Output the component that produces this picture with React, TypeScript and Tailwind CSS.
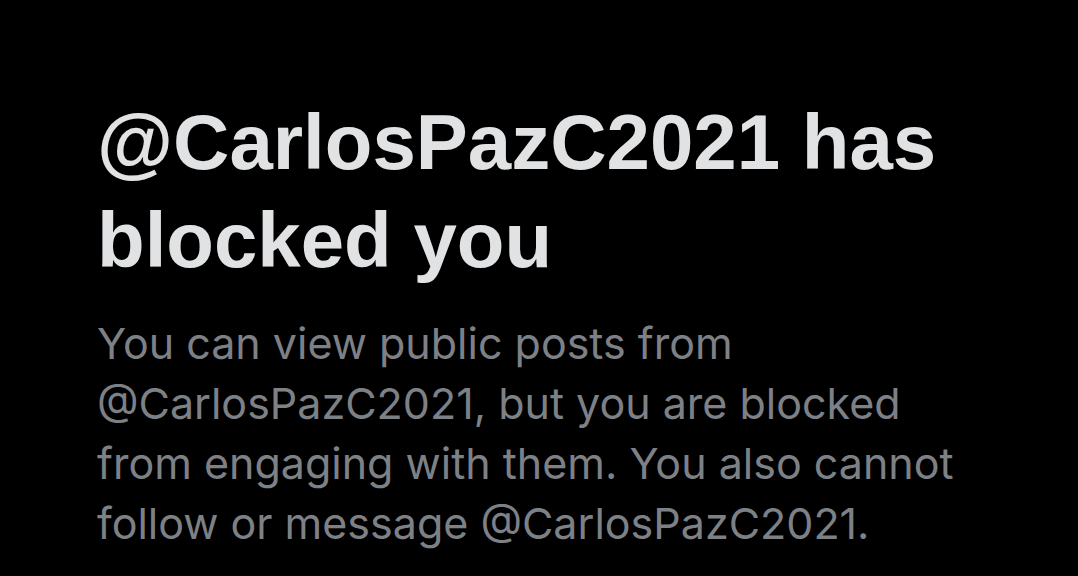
export default function App() {
  return (
    <div className="min-h-screen w-full bg-black">
      <div className="pl-[97px] pr-10 pt-[93px]">
        <h1
          className="text-[78px] leading-[98px] font-bold text-[#e1e2e3]"
          style={{ fontFamily: '"Liberation Sans", Arial, sans-serif' }}
        >
          @CarlosPazC2021 has
          <br />
          blocked you
        </h1>
        <p
          className="mt-[24px] w-[960px] text-[43px] leading-[60px] text-[#7d8186]"
          style={{ fontFamily: 'Inter, "Noto Sans", sans-serif' }}
        >
          You can view public posts from
          <br />
          @CarlosPazC2021, but you are blocked
          <br />
          from engaging with them. You also cannot
          <br />
          follow or message @CarlosPazC2021.
        </p>
      </div>
    </div>
  );
}
